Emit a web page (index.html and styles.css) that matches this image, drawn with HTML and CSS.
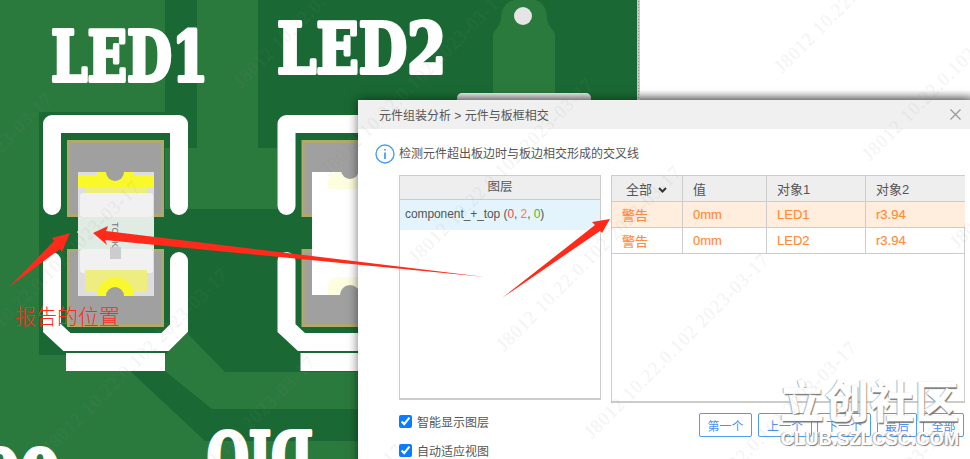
FILE: index.html
```html
<!DOCTYPE html>
<html lang="zh-CN">

<head>
    <meta charset="UTF-8">
    <title>元件组装分析</title>
    <link rel="stylesheet" href="styles.css">
</head>

<body>
    <div class="stage">
        <!-- pcb canvas -->
        <svg class="board" width="970" height="459" viewBox="0 0 970 459" xmlns="http://www.w3.org/2000/svg">
            <defs>
                <g id="footprint">
                    <rect class="pad" x="68.5" y="141.5" width="94" height="74"></rect>
                    <rect class="pad" x="68.5" y="250.5" width="94" height="75"></rect>
                    <path class="silk" d="M52 206V124H179V206"></path>
                    <path class="silk silk-low" d="M52 261V328L67 342H165L179 328V261"></path>
                    <rect class="silk-bar" x="66" y="353" width="99" height="18"></rect>
                </g>
            </defs>
            <rect class="copper" width="640" height="459"></rect>
            <rect class="ground" x="165" y="0" width="32" height="148"></rect>
            <rect class="ground" x="39" y="112" width="126" height="97"></rect>
            <rect class="ground" x="258" y="0" width="379" height="148"></rect>
            <rect class="ground" x="277" y="148" width="100" height="61"></rect>
            <polygon class="ground" points="39,209 370,209 370,372 225,372 187,333 165,355 39,355"></polygon>
            <polygon class="ground" points="165,371 212,409 370,409 370,441 205,441 130,371"></polygon>
            <path class="copper" d="M493 100V36C493 30 501 26 501 18C501 6 510 0 515 0H533C540 0 547 6 547 18C547 26 555 30 555 36V100Z"></path>
            <circle class="hole" cx="523" cy="16" r="9"></circle>

            <use href="#footprint"></use>
            <use href="#footprint" x="234.5"></use>

            <!-- led1 body -->
            <rect class="body-edge" x="78" y="172" width="76" height="124"></rect>
            <rect class="yellow" x="78" y="175" width="76" height="13"></rect>
            <rect class="yellow" x="97" y="172" width="37" height="18"></rect>
            <rect class="yellow-pale" x="85" y="188" width="62" height="9"></rect>
            <circle class="notch" cx="115" cy="172" r="9"></circle>
            <rect class="body-top" x="80" y="193" width="73" height="24" rx="3"></rect>
            <rect class="body-mid" x="78" y="217" width="76" height="32"></rect>
            <rect class="body-top" x="80" y="249" width="73" height="24" rx="3"></rect>
            <rect class="yellow-pale" x="85" y="270" width="62" height="22"></rect>
            <path class="yellow" d="M97 296A18 18 0 0 1 134 296H124A9 9 0 0 0 106 296Z"></path>
            <path class="notch" d="M106 296A9 9 0 0 1 124 296Z"></path>
            <rect class="marker" x="110" y="247" width="11" height="12"></rect>
            <text class="body-label" transform="translate(112 222) rotate(90)">TC 0K</text>
            <rect class="cyan-dot" x="77" y="231" width="1" height="2"></rect>

            <!-- led2 body -->
            <rect class="body-white" x="312" y="172" width="60" height="123"></rect>
            <path class="yellow-faint" d="M328 189V184Q328 172 340 172H372V189Z"></path>
            <circle class="notch" cx="350" cy="170" r="9"></circle>
            <path class="yellow-faint" d="M328 295V287Q328 277 340 277H372V295Z"></path>
            <path class="notch" d="M340 295A10 10 0 0 1 360 295Z"></path>

            <text class="silk-text" x="51" y="81" textLength="157" lengthAdjust="spacingAndGlyphs">LED1</text>
            <text class="silk-text" x="277" y="73" textLength="169" lengthAdjust="spacingAndGlyphs">LED2</text>
            <text class="silk-text" transform="translate(313 482) scale(-1 1)" textLength="106" lengthAdjust="spacingAndGlyphs">DIO</text>
            <text class="silk-text" transform="translate(60 499) scale(-1 1)" textLength="80" lengthAdjust="spacingAndGlyphs">00</text>
        </svg>

        <div class="edge-strip"></div>
        <div class="back-tab"></div>
        <div class="back-bar"></div>

        <div class="dialog">
            <div class="dialog-header">
                <span>元件组装分析 &gt; 元件与板框相交</span>
                <svg class="close" width="11" height="11" viewBox="0 0 11 11">
                    <path d="M0.5 0.5L10.5 10.5M10.5 0.5L0.5 10.5"></path>
                </svg>
            </div>
            <div class="info-row">
                <svg class="info-icon" width="20" height="20" viewBox="0 0 20 20">
                    <circle cx="10" cy="10" r="9"></circle>
                    <path d="M10 8.5V15M10 5V6.6"></path>
                </svg>
                <span>检测元件超出板边时与板边相交形成的交叉线</span>
            </div>
            <div class="columns">
                <div class="left-col">
                    <div class="layer-panel">
                        <div class="layer-head">图层</div>
                        <div class="layer-row">component_+_top (<span class="num-red">0</span>, <span class="num-orange">2</span>, <span class="num-green">0</span>)</div>
                    </div>
                    <label class="check"><input type="checkbox" checked>智能显示图层</label>
                    <label class="check"><input type="checkbox" checked>自动适应视图</label>
                </div>
                <div class="right-col">
                    <div class="result-panel">
                        <table class="result-table">
                            <thead>
                                <tr>
                                    <th class="col-level">全部
                                        <svg class="chevron" width="9" height="6" viewBox="0 0 9 6">
                                            <path d="M1 1L4.5 4.5L8 1"></path>
                                        </svg>
                                    </th>
                                    <th class="col-value">值</th>
                                    <th class="col-obj">对象1</th>
                                    <th class="col-obj">对象2</th>
                                </tr>
                            </thead>
                            <tbody>
                                <tr class="selected">
                                    <td>警告</td>
                                    <td>0mm</td>
                                    <td>LED1</td>
                                    <td>r3.94</td>
                                </tr>
                                <tr>
                                    <td>警告</td>
                                    <td>0mm</td>
                                    <td>LED2</td>
                                    <td>r3.94</td>
                                </tr>
                            </tbody>
                        </table>
                    </div>
                    <div class="nav-buttons">
                        <button class="nav-btn btn-first">第一个</button>
                        <button class="nav-btn btn-prev">上一个</button>
                        <button class="nav-btn btn-next">下一个</button>
                        <button class="nav-btn btn-last">最后</button>
                        <button class="nav-btn btn-all">全部</button>
                    </div>
                </div>
            </div>
        </div>

        <!-- annotations drawn on the screenshot -->
        <svg class="arrows" width="970" height="459" viewBox="0 0 970 459" xmlns="http://www.w3.org/2000/svg">
            <polygon points="9,287 54,241 52,238 70,233 62,252 60,249"></polygon>
            <polygon points="93,233 108,226 106,231 485,277 105,240 107,245"></polygon>
            <polygon points="502,298 595,225 592,222 610,219 602,233 600,231"></polygon>
        </svg>
        <div class="note">报告的位置</div>

        <div class="brand">
            <div class="brand-name">立创社区</div>
            <div class="brand-url">CLUB.SZLCSC.COM</div>
        </div>

        <svg class="watermark" width="970" height="459" viewBox="0 0 970 459" xmlns="http://www.w3.org/2000/svg">
            <defs>
                <pattern id="wm" width="393" height="124" patternUnits="userSpaceOnUse" patternTransform="translate(55 100) rotate(-45) translate(0 -60)">
                    <text x="392" y="60" text-anchor="end">J8012 10.22.0.102 2023-03-17</text>
                </pattern>
            </defs>
            <rect width="970" height="459" fill="url(#wm)"></rect>
        </svg>
    </div>
</body>

</html>
```

FILE: styles.css
```css
* {
    margin: 0;
    padding: 0;
    box-sizing: border-box;
}

body {
    width: 970px;
    height: 459px;
    overflow: hidden;
    background-color: #ffffff;
    font-family: 'Liberation Sans', 'Noto Sans CJK SC', sans-serif;
}

.stage {
    position: relative;
    width: 970px;
    height: 459px;
    overflow: hidden;
}

.board,
.arrows,
.watermark {
    position: absolute;
    top: 0;
    left: 0;
}

.arrows,
.watermark {
    pointer-events: none;
}

/* pcb */
.copper {
    fill: #2b7a3d;
}

.ground {
    fill: #1a6934;
}

.hole {
    fill: #e5e5e5;
}

.pad {
    fill: #a0a0a0;
    stroke: #b0a96a;
    stroke-width: 3;
}

.silk {
    fill: none;
    stroke: #ffffff;
    stroke-width: 18;
    stroke-linecap: round;
    stroke-linejoin: round;
}

.silk-low {
    stroke-linejoin: miter;
}

.silk-bar {
    fill: #ffffff;
}

.silk-text {
    font-family: 'DejaVu Serif', serif;
    font-weight: bold;
    font-size: 70px;
    fill: #ffffff;
    stroke: #ffffff;
    stroke-width: 4;
    stroke-linejoin: round;
}

.body-edge {
    fill: #dedede;
}

.body-top {
    fill: #f1f1f1;
}

.body-mid {
    fill: #e0ebe3;
}

.body-white {
    fill: #ffffff;
}

.yellow {
    fill: #f8f82a;
}

.yellow-pale {
    fill: #eeee80;
}

.yellow-faint {
    fill: #fdfde0;
}

.notch {
    fill: #a0a0a0;
}

.marker {
    fill: #cccccc;
}

.body-label {
    font-family: 'Liberation Sans', sans-serif;
    font-size: 9px;
    fill: #777777;
}

.cyan-dot {
    fill: #40e0e0;
}

/* things behind the dialog */
.edge-strip {
    position: absolute;
    top: 0;
    left: 637px;
    width: 3px;
    height: 100px;
    background-color: #c8c8c8;
    background-image: radial-gradient(#8f8f8f 40%, transparent 45%);
    background-size: 3px 3px;
}

.back-tab {
    position: absolute;
    top: 93px;
    left: 457px;
    width: 134px;
    height: 8px;
    border-radius: 5px 5px 0 0;
    background: linear-gradient(to bottom, #e8e8e8, #a8a8a8);
}

.back-bar {
    position: absolute;
    top: 90px;
    left: 640px;
    right: 0;
    height: 11px;
    background: linear-gradient(to bottom, #ffffff, #e2e2e2 40%, #a6a6a6);
}

/* dialog */
.dialog {
    position: absolute;
    top: 100px;
    left: 358px;
    width: 612px;
    height: 370px;
    background-color: #ffffff;
    box-shadow: 0 0 10px rgba(0, 0, 0, 0.55);
    color: #555555;
    font-size: 12px;
}

.dialog-header {
    display: flex;
    align-items: center;
    justify-content: space-between;
    height: 29px;
    padding: 0 9px 0 21px;
    background-color: #f0f0f0;
}

.close path {
    fill: none;
    stroke: #999999;
    stroke-width: 1.3;
}

.info-row {
    display: flex;
    align-items: center;
    gap: 4px;
    margin: 15px 0 0 17px;
    height: 20px;
    line-height: 18px;
}

.info-icon circle {
    fill: none;
    stroke: #4a9ff0;
    stroke-width: 1.4;
}

.info-icon path {
    fill: none;
    stroke: #4a9ff0;
    stroke-width: 1.8;
}

.columns {
    display: flex;
    gap: 10px;
    margin: 11px 0 0 41px;
}

.left-col {
    width: 202px;
}

.layer-panel {
    height: 225px;
    border: 1px solid #cccccc;
    border-bottom-width: 2px;
}

.layer-head {
    height: 24px;
    line-height: 23px;
    text-align: center;
    font-size: 12.5px;
    background-color: #eeeeee;
    border-bottom: 1px solid #cccccc;
}

.layer-row {
    height: 30px;
    line-height: 29px;
    padding-left: 5px;
    font-size: 12px;
    letter-spacing: -0.08px;
    background-color: #e3f4fc;
}

.num-red {
    color: #ff4040;
}

.num-orange {
    color: #ff8020;
}

.num-green {
    color: #44bb22;
}

.check {
    display: flex;
    align-items: center;
    gap: 5px;
    height: 13px;
    margin-top: 15px;
    font-size: 12px;
}

.check + .check {
    margin-top: 16px;
}

.check input {
    width: 13px;
    height: 13px;
    accent-color: #0a7cff;
}

.right-col {
    width: 354px;
}

.result-panel {
    height: 228px;
    border: 1px solid #cccccc;
    border-bottom-width: 2px;
}

.result-table {
    width: 352px;
    border-collapse: separate;
    border-spacing: 0;
    table-layout: fixed;
}

.result-table th,
.result-table td {
    height: 26px;
    padding-left: 10px;
    text-align: left;
    font-weight: normal;
    font-size: 13px;
    border-right: 1px solid #cccccc;
    border-bottom: 1px solid #cccccc;
}

.result-table th:last-child,
.result-table td:last-child {
    border-right: none;
}

.result-table th {
    background-color: #eeeeee;
    color: #555555;
}

.result-table td {
    color: #ff8c3a;
    -webkit-text-stroke: 0.2px #ff8c3a;
}

.result-table .selected td {
    background-color: #ffeedd;
}

.result-table .col-level {
    width: 71px;
    padding-left: 14px;
}

.result-table .col-value {
    width: 84px;
}

.result-table .col-obj {
    width: 99px;
}

.chevron {
    margin-left: 2px;
    vertical-align: 1px;
}

.chevron path {
    fill: none;
    stroke: #333333;
    stroke-width: 2;
}

.nav-buttons {
    display: flex;
    margin-top: 10px;
    margin-left: 88px;
}

.nav-btn {
    height: 24px;
    font-family: inherit;
    font-size: 12px;
    color: #4a90f0;
    background-color: #ffffff;
    border: 1px solid #4a9ff0;
    border-radius: 2px;
}

.btn-first {
    width: 53px;
    margin-right: 6px;
}

.btn-prev {
    width: 54px;
    margin-right: 5px;
}

.btn-next {
    width: 54px;
    margin-right: 6px;
}

.btn-last {
    width: 40px;
    margin-right: 6px;
}

.btn-all {
    width: 41px;
}

/* annotations */
.arrows polygon {
    fill: #ff2a1a;
}

.note {
    position: absolute;
    top: 302px;
    left: 15px;
    font-family: 'Noto Sans CJK SC', sans-serif;
    font-size: 21px;
    font-weight: 300;
    line-height: 26px;
    color: #ff2a1a;
}

/* site logo over the corner */
.brand {
    position: absolute;
    top: 372px;
    left: 778px;
    width: 184px;
    color: #ffffff;
    text-align: center;
}

.brand-name {
    font-family: 'Noto Sans CJK SC', sans-serif;
    font-size: 44px;
    font-weight: bold;
    line-height: 54px;
    letter-spacing: 1px;
    -webkit-text-stroke: 0.6px #ffffff;
    text-shadow: 1px 2px 1px #777777, -1px 0 1px #999999;
}

.brand-url {
    margin-top: 3px;
    font-size: 18px;
    font-weight: bold;
    line-height: 20px;
    letter-spacing: 0.3px;
    -webkit-text-stroke: 0.4px #ffffff;
    text-shadow: 1px 1px 1px #666666, -1px 0 1px #999999;
}

.watermark text {
    font-family: 'Liberation Serif', serif;
    font-size: 18px;
    letter-spacing: 1.1px;
    fill: rgba(130, 130, 130, 0.11);
}
```
